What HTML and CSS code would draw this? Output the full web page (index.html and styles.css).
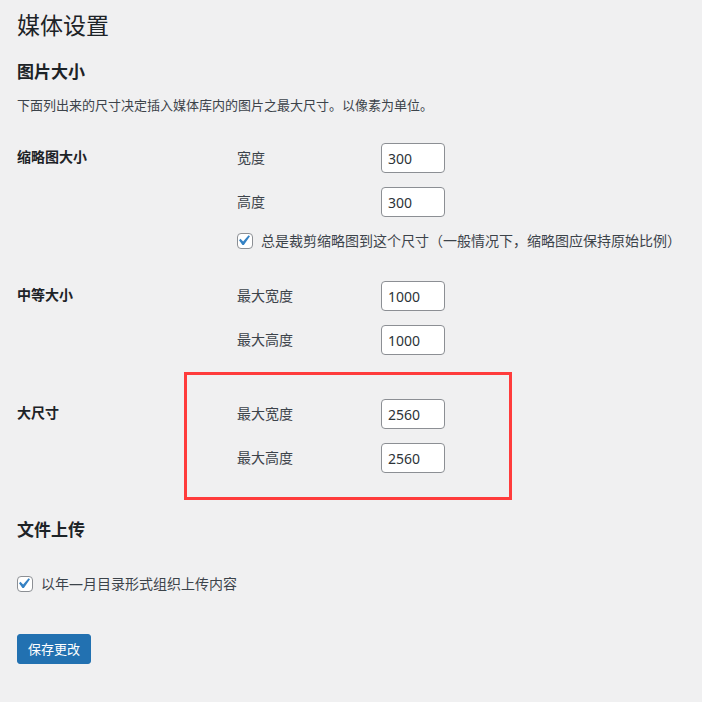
FILE: index.html
```html
<!DOCTYPE html>
<html lang="zh-CN">
<head>
<meta charset="utf-8">
<title>媒体设置</title>
<link rel="stylesheet" href="styles.css">
</head>
<body>
<div class="wrap">
  <h1 class="page-title">媒体设置</h1>

  <h2 class="section-title">图片大小</h2>
  <p class="desc">下面列出来的尺寸决定插入媒体库内的图片之最大尺寸。以像素为单位。</p>

  <div class="form-table">
    <div class="row">
      <div class="th">缩略图大小</div>
      <div class="td">
        <div class="field"><label class="field-label">宽度</label><input class="small-text" type="text" value="300"></div>
        <div class="field"><label class="field-label">高度</label><input class="small-text" type="text" value="300"></div>
        <div class="check-row">
          <span class="checkbox"><svg viewBox="4.8 3.8 13.3 13.3" width="14" height="14"><path d="M14.83 4.89l1.34.94-5.81 8.38H9.02L5.78 9.67l1.34-1.25 2.57 2.4z" fill="#3582c4"/></svg></span>
          <span class="check-text">总是裁剪缩略图到这个尺寸（一般情况下，缩略图应保持原始比例）</span>
        </div>
      </div>
    </div>

    <div class="row">
      <div class="th">中等大小</div>
      <div class="td">
        <div class="field"><label class="field-label">最大宽度</label><input class="small-text" type="text" value="1000"></div>
        <div class="field"><label class="field-label">最大高度</label><input class="small-text" type="text" value="1000"></div>
      </div>
    </div>

    <div class="row row-highlight">
      <div class="th">大尺寸</div>
      <div class="td">
        <div class="field"><label class="field-label">最大宽度</label><input class="small-text" type="text" value="2560"></div>
        <div class="field"><label class="field-label">最大高度</label><input class="small-text" type="text" value="2560"></div>
      </div>
      <div class="highlight-box"></div>
    </div>
  </div>

  <h2 class="section-title upload-title">文件上传</h2>
  <div class="upload-row">
    <span class="checkbox"><svg viewBox="4.8 3.8 13.3 13.3" width="14" height="14"><path d="M14.83 4.89l1.34.94-5.81 8.38H9.02L5.78 9.67l1.34-1.25 2.57 2.4z" fill="#3582c4"/></svg></span>
    <span class="check-text">以年—月目录形式组织上传内容</span>
  </div>

  <div class="submit-row">
    <button class="button-primary" type="button">保存更改</button>
  </div>
</div>
</body>
</html>
```

FILE: styles.css
```css
* { box-sizing: border-box; }

html, body {
  margin: 0;
  padding: 0;
  background: #f0f0f1;
}

body {
  font-family: "Noto Sans", "Noto Sans CJK SC", sans-serif;
  color: #3c434a;
  font-size: 13px;
}

.wrap {
  padding: 10px 0 0 17px;
}

.page-title {
  margin: 0;
  font-size: 23px;
  font-weight: 400;
  line-height: 30px;
  color: #1d2327;
}

.section-title {
  margin: 21px 0 0;
  font-size: 17px;
  font-weight: 600;
  line-height: 22px;
  color: #1d2327;
}

.desc {
  margin: 12px 0 0;
  font-size: 13px;
  line-height: 20px;
  color: #3c434a;
}

.form-table {
  margin-top: 13px;
}

.row {
  display: flex;
}

.row-highlight {
  position: relative;
}

.th {
  width: 210px;
  flex: none;
  padding: 20px 10px 20px 0;
  font-size: 14px;
  font-weight: 600;
  line-height: 18px;
  color: #1d2327;
}

.td {
  padding: 15px 0 15px 10px;
  flex: 1;
  min-width: 0;
}

.field {
  display: flex;
  align-items: center;
  height: 30px;
  margin-bottom: 14px;
}

.field-label {
  width: 144px;
  flex: none;
  font-size: 14px;
  line-height: 20px;
  color: #3c434a;
}

.small-text {
  width: 64px;
  height: 30px;
  border: 1px solid #8c8f94;
  border-radius: 4px;
  background: #fff;
  padding: 0 6px;
  font-family: "Noto Sans", "Noto Sans CJK SC", sans-serif;
  font-size: 14px;
  color: #2c3338;
  outline: none;
}

.check-row {
  display: flex;
  align-items: center;
  height: 20px;
  white-space: nowrap;
}

.checkbox {
  width: 16px;
  height: 16px;
  flex: none;
  border: 1px solid #8c8f94;
  border-radius: 4px;
  background: #fff;
  display: flex;
  align-items: center;
  justify-content: center;
  margin-right: 8px;
}

.checkbox svg {
  display: block;
}

.check-text {
  font-size: 14px;
  line-height: 20px;
  color: #3c434a;
  white-space: nowrap;
}

.highlight-box {
  position: absolute;
  left: 167px;
  top: -12px;
  width: 328px;
  height: 128px;
  border: 3px solid #ff3c3c;
  pointer-events: none;
}

.upload-title {
  margin-top: 17px;
}

.upload-row {
  display: flex;
  align-items: center;
  height: 20px;
  margin-top: 33px;
}

.submit-row {
  margin-top: 40px;
}

.button-primary {
  height: 30px;
  width: 74px;
  padding: 0 10px;
  border: 1px solid #2271b1;
  border-radius: 3px;
  background: #2271b1;
  color: #fff;
  font-family: "Noto Sans", "Noto Sans CJK SC", sans-serif;
  font-size: 13px;
  line-height: 28px;
  cursor: pointer;
}
```
